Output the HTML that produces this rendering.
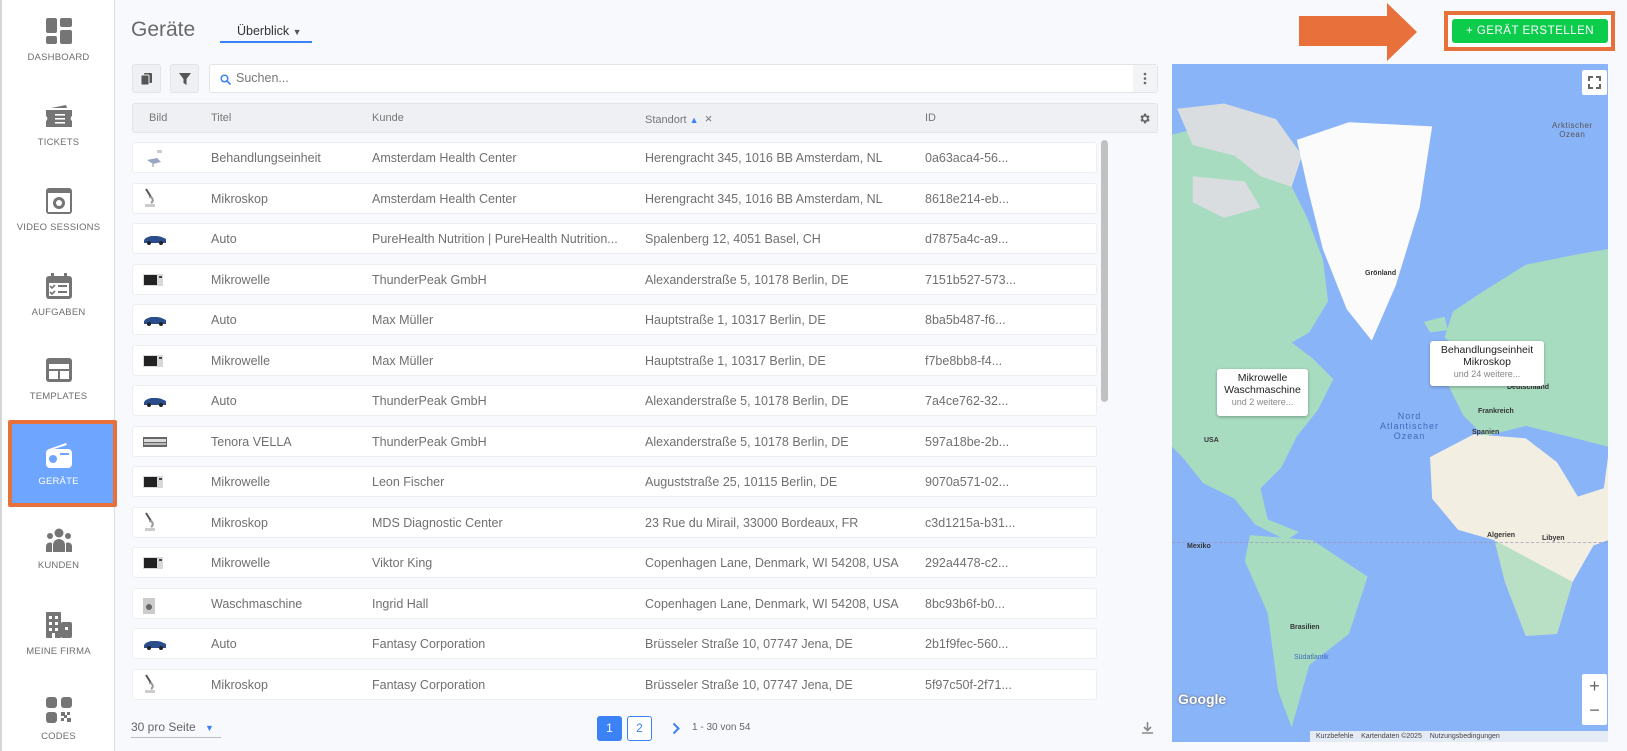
<!DOCTYPE html>
<html><head><meta charset="utf-8">
<style>
*{box-sizing:border-box;margin:0;padding:0}
body{width:1627px;height:751px;overflow:hidden;background:#f8f9fc;font-family:"Liberation Sans",sans-serif;color:#666;position:relative}
.side{position:absolute;left:0;top:0;width:115px;height:751px;background:#fff;border-right:1px solid #dcdde0;border-left:2px solid #d6d6d6}
.nav{position:absolute;left:0;width:113px;text-align:center;font-size:9.5px;color:#6e6e6e;letter-spacing:.2px}
.nav svg{display:block;margin:0 auto 8px}
.sel{position:absolute;left:6px;top:420px;width:109px;height:87px;background:#6ea6ff;border:4px solid #e8703a;border-radius:2px}
.abs{position:absolute}
.row{position:absolute;left:132px;width:965px;height:31px;background:#fff;border:1px solid #eceef2;border-radius:3px;font-size:12.5px;color:#707070}
.cell{position:absolute;top:8px;white-space:nowrap}
.hdr{position:absolute;left:132px;top:103px;width:1026px;height:30px;background:#eef0f3;border:1px solid #e2e4e8;border-radius:3px;font-size:11px;color:#777}
.hdr .cell{top:8px;line-height:13px}
.c1{left:16px}.c2{left:78px}.c3{left:239px}.c4{left:512px}.c5{left:792px}
.ml{position:absolute;font-size:7px;color:#333;font-weight:bold;white-space:nowrap}
</style></head><body>
<div class="side">
 <div class="sel"></div>
 <div class="nav" style="top:18px"><svg width="26" height="26" viewBox="0 0 26 26" fill="#757575"><rect x="0" y="0" width="11" height="15" rx="2"/><rect x="14" y="0" width="12" height="9" rx="2"/><rect x="0" y="18" width="11" height="8" rx="2"/><rect x="14" y="12" width="12" height="14" rx="2"/></svg>DASHBOARD</div>
 <div class="nav" style="top:103px"><svg width="26" height="26" viewBox="0 0 26 26" fill="#757575"><path d="M5 5 L20 2 L21 5Z"/><path d="M0 7h26v6a3 3 0 0 0 0 5v6H0v-6a3 3 0 0 0 0-5z"/><rect x="9" y="11" width="10" height="1.6" fill="#fff"/><rect x="9" y="15" width="10" height="1.6" fill="#fff"/><rect x="9" y="19" width="10" height="1.6" fill="#fff"/></svg>TICKETS</div>
 <div class="nav" style="top:188px"><svg width="26" height="26" viewBox="0 0 26 26" fill="#757575"><rect x="0" y="0" width="26" height="26" rx="3"/><rect x="2" y="5" width="22" height="19" fill="#fff"/><circle cx="13" cy="15" r="6" fill="#757575"/><circle cx="13" cy="15" r="3" fill="#fff"/></svg>VIDEO SESSIONS</div>
 <div class="nav" style="top:273px"><svg width="26" height="26" viewBox="0 0 26 26" fill="#757575"><rect x="0" y="3" width="26" height="23" rx="3"/><rect x="5" y="0" width="3" height="6"/><rect x="18" y="0" width="3" height="6"/><rect x="3" y="10" width="20" height="13" fill="#fff"/><rect x="12" y="12" width="9" height="2"/><rect x="12" y="18" width="9" height="2"/><path d="M4 13l2 2 3-3" stroke="#757575" stroke-width="1.6" fill="none"/><path d="M4 19l2 2 3-3" stroke="#757575" stroke-width="1.6" fill="none"/></svg>AUFGABEN</div>
 <div class="nav" style="top:357px"><svg width="26" height="26" viewBox="0 0 26 26" fill="#757575"><rect x="0" y="1" width="26" height="24" rx="3"/><rect x="3" y="7" width="20" height="5" fill="#fff"/><rect x="3" y="14" width="9" height="8" fill="#fff"/><rect x="14" y="14" width="9" height="8" fill="#fff"/></svg>TEMPLATES</div>
 <div class="nav" style="top:442px;color:#fff"><svg width="26" height="26" viewBox="0 0 26 26" fill="#fff"><path d="M3 7 L20 1 L21 3 L8 7Z"/><rect x="0" y="7" width="26" height="19" rx="4"/><circle cx="7" cy="17" r="4" fill="#6ea6ff"/><rect x="14" y="11" width="9" height="2" fill="#6ea6ff"/></svg>GERÄTE</div>
 <div class="nav" style="top:528px"><svg width="26" height="24" viewBox="0 0 26 24" fill="#757575"><circle cx="13" cy="5" r="4.5"/><circle cx="4" cy="8" r="3"/><circle cx="22" cy="8" r="3"/><path d="M7 24v-7a6 6 0 0 1 12 0v7z"/><path d="M0 24v-6a4 4 0 0 1 6-3v9z"/><path d="M26 24v-6a4 4 0 0 0-6-3v9z"/></svg>KUNDEN</div>
 <div class="nav" style="top:612px"><svg width="26" height="26" viewBox="0 0 26 26" fill="#757575"><rect x="0" y="0" width="15" height="26" rx="1"/><rect x="15" y="10" width="11" height="16" rx="2"/><g fill="#fff"><rect x="3" y="4" width="3" height="3"/><rect x="9" y="4" width="3" height="3"/><rect x="3" y="10" width="3" height="3"/><rect x="9" y="10" width="3" height="3"/><rect x="3" y="16" width="3" height="3"/><rect x="9" y="16" width="3" height="3"/><rect x="6" y="21" width="3" height="5"/><rect x="19" y="15" width="3" height="3"/></g></svg>MEINE FIRMA</div>
 <div class="nav" style="top:697px"><svg width="26" height="26" viewBox="0 0 26 26" fill="#757575"><rect x="0" y="0" width="11" height="11" rx="3"/><rect x="15" y="0" width="11" height="11" rx="3"/><rect x="0" y="15" width="11" height="11" rx="3"/><rect x="15" y="15" width="4" height="4"/><rect x="21" y="21" width="4" height="4"/><rect x="15" y="21" width="3" height="3"/><rect x="21" y="15" width="3" height="3"/><rect x="18" y="18" width="3" height="3"/></svg>CODES</div>
</div>

<div class="abs" style="left:131px;top:18px;font-size:21px;color:#6a6a6a">Geräte</div>
<div class="abs" style="left:220px;top:24px;width:92px;height:19px;border-bottom:2px solid #3b82f6;font-size:12.5px;color:#333;padding-left:17px">Überblick <span style="font-size:9px;color:#555">▼</span></div>

<div class="abs" style="left:1299px;top:16px;width:90px;height:30px;background:#e8703a"></div>
<svg class="abs" style="left:1387px;top:3px" width="31" height="58"><path d="M0 0 L30 29 L0 58Z" fill="#e8703a"/></svg>
<div class="abs" style="left:1444px;top:11px;width:171px;height:40px;border:4px solid #e8703a;background:#fff"></div>
<div class="abs" style="left:1452px;top:19px;width:156px;height:24px;background:#0ccc4c;border-radius:3px;color:#fff;font-size:11.5px;text-align:center;line-height:24px;letter-spacing:.5px">+ GERÄT ERSTELLEN</div>

<div class="abs" style="left:132px;top:64px;width:29px;height:29px;background:#eef0f3;border:1px solid #e2e4e8;border-radius:3px"><svg style="margin:8px" width="12" height="12" viewBox="0 0 12 12" fill="#555"><rect x="3" y="0" width="8" height="10" rx="1"/><rect x="0" y="2" width="8" height="10" rx="1" stroke="#eef0f3"/></svg></div>
<div class="abs" style="left:170px;top:64px;width:29px;height:29px;background:#eef0f3;border:1px solid #e2e4e8;border-radius:3px"><svg style="margin:8px" width="12" height="12" viewBox="0 0 12 12" fill="#555"><path d="M0 0h12L7.5 6v6l-3-2V6z"/></svg></div>
<div class="abs" style="left:209px;top:64px;width:949px;height:29px;background:#fff;border:1px solid #e2e4e8;border-radius:3px;font-size:12.5px;color:#777;line-height:27px;padding-left:26px">Suchen...
 <svg class="abs" style="left:10px;top:9px" width="11" height="11" viewBox="0 0 11 11"><circle cx="4.5" cy="4.5" r="3.3" stroke="#3b82f6" stroke-width="1.5" fill="none"/><path d="M7 7l3.5 3.5" stroke="#3b82f6" stroke-width="1.6"/></svg>
 <div class="abs" style="right:0;top:0;width:24px;height:27px;background:#f3f4f6"><svg width="24" height="27"><circle cx="12" cy="9" r="1.3" fill="#666"/><circle cx="12" cy="13.5" r="1.3" fill="#666"/><circle cx="12" cy="18" r="1.3" fill="#666"/></svg></div>
</div>

<div class="hdr"><span class="cell c1">Bild</span><span class="cell c2">Titel</span><span class="cell c3">Kunde</span><span class="cell c4">Standort <span style="color:#3b82f6;font-size:9px;line-height:13px">▲</span>&nbsp;&nbsp;<span style="font-size:13px;line-height:13px">×</span></span><span class="cell c5">ID</span>
<svg class="abs" style="right:6px;top:8px" width="13" height="13" viewBox="0 0 24 24" fill="#666"><path d="M19.4 13a7.5 7.5 0 0 0 0-2l2.1-1.6-2-3.5-2.5 1a7 7 0 0 0-1.7-1L15 3h-4l-.4 2.9a7 7 0 0 0-1.7 1l-2.5-1-2 3.5L6.6 11a7.5 7.5 0 0 0 0 2l-2.1 1.6 2 3.5 2.5-1a7 7 0 0 0 1.7 1L11 21h4l.4-2.9a7 7 0 0 0 1.7-1l2.5 1 2-3.5zM13 15.5a3.5 3.5 0 1 1 0-7 3.5 3.5 0 0 1 0 7z"/></svg></div>

<div class="abs" style="left:1101px;top:140px;width:7px;height:262px;background:#c1c1c1;border-radius:4px"></div>

<div id="rows"></div>
<script>
var d=[["c","Behandlungseinheit","Amsterdam Health Center","Herengracht 345, 1016 BB Amsterdam, NL","0a63aca4-56..."],
["m","Mikroskop","Amsterdam Health Center","Herengracht 345, 1016 BB Amsterdam, NL","8618e214-eb..."],
["a","Auto","PureHealth Nutrition | PureHealth Nutrition...","Spalenberg 12, 4051 Basel, CH","d7875a4c-a9..."],
["w","Mikrowelle","ThunderPeak GmbH","Alexanderstraße 5, 10178 Berlin, DE","7151b527-573..."],
["a","Auto","Max Müller","Hauptstraße 1, 10317 Berlin, DE","8ba5b487-f6..."],
["w","Mikrowelle","Max Müller","Hauptstraße 1, 10317 Berlin, DE","f7be8bb8-f4..."],
["a","Auto","ThunderPeak GmbH","Alexanderstraße 5, 10178 Berlin, DE","7a4ce762-32..."],
["t","Tenora VELLA","ThunderPeak GmbH","Alexanderstraße 5, 10178 Berlin, DE","597a18be-2b..."],
["w","Mikrowelle","Leon Fischer","Auguststraße 25, 10115 Berlin, DE","9070a571-02..."],
["m","Mikroskop","MDS Diagnostic Center","23 Rue du Mirail, 33000 Bordeaux, FR","c3d1215a-b31..."],
["w","Mikrowelle","Viktor King","Copenhagen Lane, Denmark, WI 54208, USA","292a4478-c2..."],
["s","Waschmaschine","Ingrid Hall","Copenhagen Lane, Denmark, WI 54208, USA","8bc93b6f-b0..."],
["a","Auto","Fantasy Corporation","Brüsseler Straße 10, 07747 Jena, DE","2b1f9fec-560..."],
["m","Mikroskop","Fantasy Corporation","Brüsseler Straße 10, 07747 Jena, DE","5f97c50f-2f71..."]];
var ic={c:'<svg width="22" height="20"><path d="M4 12l10-2 4 4-8 2z" fill="#9aa6c4"/><path d="M14 2h5v3h-5z" fill="#ccc"/><path d="M10 16v3" stroke="#888"/></svg>',
m:'<svg width="14" height="22"><path d="M3 2l5 8" stroke="#555" stroke-width="2"/><path d="M6 10c4 0 5 4 2 6" stroke="#999" stroke-width="2" fill="none"/><rect x="2" y="17" width="10" height="3" fill="#ccc"/></svg>',
a:'<svg width="24" height="12"><path d="M1 8c0-3 4-4 7-5h6c3 0 7 2 9 3v4H1z" fill="#2b4d8c"/><circle cx="6" cy="10" r="2" fill="#222"/><circle cx="18" cy="10" r="2" fill="#222"/></svg>',
w:'<svg width="20" height="12"><rect x="0" y="0" width="20" height="12" fill="#d8d8d8"/><rect x="1" y="1" width="13" height="10" fill="#222"/><rect x="16" y="2" width="3" height="2" fill="#444"/></svg>',
t:'<svg width="24" height="12"><rect x="0" y="1" width="24" height="10" fill="#666"/><rect x="1" y="3" width="22" height="3" fill="#ddd"/><rect x="1" y="7" width="22" height="2" fill="#bbb"/></svg>',
s:'<svg width="12" height="16"><rect x="0" y="0" width="12" height="16" fill="#ccc"/><circle cx="6" cy="9" r="3" fill="#666"/></svg>'};
var h="";for(var i=0;i<d.length;i++){var y=142+i*40.5;var r=d[i];
h+='<div class="row" style="top:'+y+'px"><span class="cell" style="left:10px;top:'+(r[0]=="m"?3:r[0]=="c"?5:9)+'px">'+ic[r[0]]+'</span><span class="cell c2">'+r[1]+'</span><span class="cell c3">'+r[2]+'</span><span class="cell c4">'+r[3]+'</span><span class="cell c5">'+r[4]+'</span></div>';}
document.getElementById("rows").innerHTML=h;
</script>

<div class="abs" style="left:131px;top:720px;width:90px;height:18px;border-bottom:1px solid #bbb;font-size:12px;color:#666">30 pro Seite <span style="color:#3b82f6;font-size:9px;margin-left:6px">▼</span></div>
<div class="abs" style="left:597px;top:716px;width:25px;height:25px;background:#3b82f6;border-radius:3px;color:#fff;font-size:12px;text-align:center;line-height:25px">1</div>
<div class="abs" style="left:627px;top:716px;width:25px;height:25px;border:1px solid #3b82f6;border-radius:3px;color:#3b82f6;font-size:12px;text-align:center;line-height:23px;background:#fff">2</div>
<svg class="abs" style="left:672px;top:722px" width="8" height="13"><path d="M1.5 1.5l5 5-5 5" stroke="#3b82f6" stroke-width="2" fill="none"/></svg>
<div class="abs" style="left:692px;top:722px;font-size:10px;color:#666">1 - 30 von 54</div>
<svg class="abs" style="left:1142px;top:722px" width="11" height="12"><path d="M5.5 0v8M2 5l3.5 3.5L9 5M0 11h11" stroke="#888" stroke-width="1.6" fill="none"/></svg>

<div class="abs" style="left:1172px;top:64px;width:436px;height:678px;background:#8ab4f8;overflow:hidden">
<svg width="436" height="678" viewBox="1130 62 419 652" preserveAspectRatio="none" style="position:absolute;left:0;top:0">
 <path d="M1130 130 L1170 120 L1210 140 L1240 170 L1260 210 L1275 250 L1280 290 L1262 320 L1245 330 L1215 300 L1175 290 L1130 300Z" fill="#a8dcc0"/>
 <path d="M1135 105 L1180 100 L1230 115 L1255 150 L1245 180 L1215 170 L1190 150 L1150 140Z M1150 170 L1200 175 L1215 200 L1180 210 L1150 195Z" fill="#d9dde0"/>
 <path d="M1130 300 L1175 290 L1215 300 L1245 330 L1265 345 L1285 365 L1270 395 L1250 420 L1235 450 L1215 470 L1222 500 L1252 512 L1240 520 L1210 505 L1190 480 L1160 465 L1140 440 L1130 430Z" fill="#a8dcc0"/>
 <path d="M1250 135 L1300 118 L1380 122 L1368 200 L1345 275 L1322 328 L1298 298 L1275 240 L1260 180Z" fill="#fbfbfb"/>
 <path d="M1205 515 L1265 520 L1318 555 L1300 610 L1262 640 L1245 700 L1232 665 L1222 590 L1200 540Z" fill="#a8dcc0"/>
 <path d="M1400 300 L1430 280 L1470 255 L1520 245 L1549 240 L1549 430 L1510 420 L1470 410 L1430 420 L1410 400 L1395 370 L1405 335 L1392 325Z" fill="#a8dcc0"/>
 <path d="M1372 310 L1392 305 L1395 318 L1378 320Z" fill="#a8dcc0"/>
 <path d="M1378 440 L1420 418 L1470 422 L1500 445 L1520 478 L1545 470 L1549 440 L1549 520 L1535 525 L1515 560 L1500 610 L1470 612 L1450 560 L1440 520 L1405 510 L1380 480Z" fill="#f3eee2"/>
 <path d="M1440 520 L1515 560 L1500 610 L1470 612 L1450 560Z" fill="#b9e0c4"/>
 <path d="M1130 522 L1549 522" stroke="#9a8ab0" stroke-dasharray="3 2" stroke-width=".6"/>
</svg>
<div class="ml" style="left:193px;top:206px">Grönland</div>
<div class="ml" style="top:57px;color:#555;font-weight:normal;font-size:8px;text-align:center;line-height:9px;letter-spacing:.5px;left:380px">Arktischer<br>Ozean</div>
<div class="ml" style="left:208px;top:347px;color:#3e6bb8;font-weight:normal;font-size:9px;text-align:center;line-height:10px;letter-spacing:1px">Nord<br>Atlantischer<br>Ozean</div>
<div class="ml" style="left:306px;top:344px">Frankreich</div>
<div class="ml" style="left:300px;top:365px">Spanien</div>
<div class="ml" style="left:335px;top:320px">Deutschland</div>
<div class="ml" style="left:32px;top:373px">USA</div>
<div class="ml" style="left:15px;top:479px">Mexiko</div>
<div class="ml" style="left:315px;top:468px">Algerien</div>
<div class="ml" style="left:370px;top:471px">Libyen</div>
<div class="ml" style="left:122px;top:590px;color:#3e6bb8;font-weight:normal">Südatlantik</div>
<div class="ml" style="left:118px;top:560px">Brasilien</div>
<div class="abs" style="left:45px;top:305px;width:91px;height:47px;background:#fff;border-radius:3px;box-shadow:0 1px 3px rgba(0,0,0,.3);text-align:center;font-size:10.5px;color:#222;line-height:12px;padding-top:3px">Mikrowelle<br>Waschmaschine<br><span style="color:#888;font-size:9px">und 2 weitere...</span></div>
<div class="abs" style="left:258px;top:277px;width:114px;height:45px;background:#fff;border-radius:3px;box-shadow:0 1px 3px rgba(0,0,0,.3);text-align:center;font-size:10.5px;color:#222;line-height:12px;padding-top:3px">Behandlungseinheit<br>Mikroskop<br><span style="color:#888;font-size:9px">und 24 weitere...</span></div>
<div class="abs" style="left:410px;top:6px;width:25px;height:25px;background:#fff;border-radius:2px"><svg width="25" height="25"><path d="M7 11V7h4M14 7h4v4M18 14v4h-4M11 18H7v-4" stroke="#666" stroke-width="2" fill="none"/></svg></div>
<div class="abs" style="left:410px;top:610px;width:25px;height:51px;background:#fff;border-radius:2px;text-align:center;font-size:18px;color:#666;line-height:24px">+<br>−</div>
<div class="abs" style="left:6px;top:627px;font-size:14px;color:#fff;font-weight:bold;text-shadow:0 0 2px #555">Google</div>
<div class="abs" style="right:0;bottom:0;height:11px;width:298px;background:rgba(245,245,245,.85);font-size:7px;color:#444;line-height:11px;padding-left:6px;white-space:nowrap">Kurzbefehle &nbsp;&nbsp; Kartendaten ©2025 &nbsp;&nbsp; Nutzungsbedingungen</div>
</div>
</body></html>
